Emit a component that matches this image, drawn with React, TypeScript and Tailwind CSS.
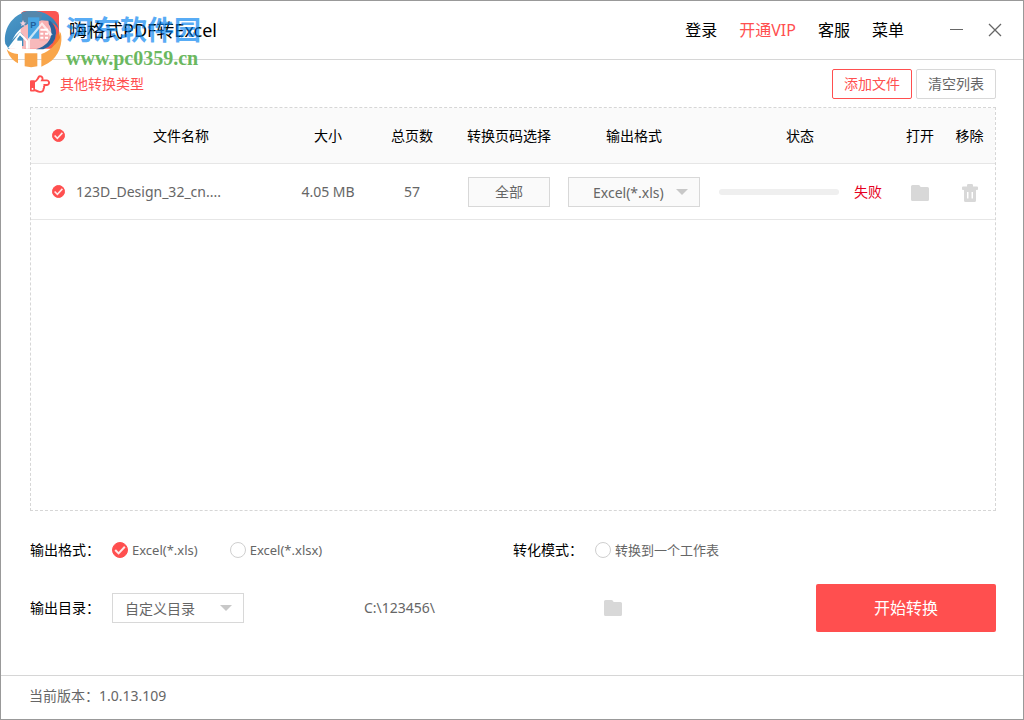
import React, { useState } from "react";
import { FaRegHandPointRight } from "react-icons/fa";

const headings = ["文件名称", "大小", "总页数", "转换页码选择", "输出格式", "状态", "打开", "移除"];

const menu = [
    { label: "登录", color: "text-black" },
    { label: "开通VIP", color: "text-[#ff4f4f]" },
    { label: "客服", color: "text-black" },
    { label: "菜单", color: "text-black" },
];

function FolderIcon() {
    return (
        <svg width="18" height="16" viewBox="0 0 18 16" className="fill-[#d8d8d8]">
            <path d="M1.5 0H7.5Q8.5 0 9 1L9.6 2H16.5Q18 2 18 3.5V14.5Q18 16 16.5 16H1.5Q0 16 0 14.500V1.5Q0 0 1.5 0Z" />
        </svg>
    );
}

function TrashIcon() {
    return (
        <svg width="16" height="18" viewBox="0 0 16 18" className="fill-[#d8d8d8]">
            <path
                fillRule="evenodd"
                d="M5 2.500V1.200Q5 0 6.200 0H9.800Q11 0 11 1.200V2.500H15Q16 2.500 16 3.500V5.200Q16 6 15 6H14V16.500Q14 18 12.500 18H3.500Q2 18 2 16.500V6H1Q0 6 0 5.200V3.500Q0 2.500 1 2.500ZM5 8V14.500H6.500V8ZM9.500 8V14.500H11V8Z"
            />
        </svg>
    );
}

function Tick({ className }: { className: string }) {
    return (
        <svg viewBox="0 0 16 16" className={`pointer-events-none col-start-1 row-start-1 ${className}`}>
            <path d="M3.200 8L6.600 11.400L12.800 4.800" fill="none" stroke="#ffe9e9" strokeWidth="2" />
        </svg>
    );
}

function RowCheck({ label }: { label: string }) {
    const [on, setOn] = useState(true);
    return (
        <span className="grid w-[13px]">
            <input
                type="checkbox"
                aria-label={label}
                checked={on}
                onChange={() => setOn(!on)}
                className="peer col-start-1 row-start-1 size-[13px] appearance-none rounded-full border border-[#d0d0d0] checked:border-[#ff4f4f] checked:bg-[#ff4f4f]"
            />
            <Tick className="hidden size-[13px] peer-checked:block" />
        </span>
    );
}

type RadioProps = { name: string; label: string; checked: boolean; onChange: () => void };

function Radio({ name, label, checked, onChange }: RadioProps) {
    return (
        <label className="flex items-center gap-1 text-[13px] text-[#666]">
            <span className="grid">
                <input
                    type="radio"
                    name={name}
                    checked={checked}
                    onChange={onChange}
                    className="peer col-start-1 row-start-1 size-4 appearance-none rounded-full border border-[#cfcfcf] checked:border-[#ff4f4f] checked:bg-[#ff4f4f]"
                />
                <Tick className="hidden size-4 peer-checked:block" />
            </span>
            {label}
        </label>
    );
}

type DropDownProps = { label: string; options: string[]; className: string };

function DropDown({ label, options, className }: DropDownProps) {
    return (
        <span className="relative inline-block align-middle">
            <select
                aria-label={label}
                className={`block h-[30px] w-[132px] appearance-none border border-[#d8d8d8] pt-0.5 text-sm text-[#666] ${className}`}
            >
                {options.map((o) => (
                    <option key={o}>{o}</option>
                ))}
            </select>
            <svg width="12" height="6" viewBox="0 0 12 6" className="pointer-events-none absolute top-3 right-3 fill-[#c8c8c8]">
                <path d="M0 0H12L6 6Z" />
            </svg>
        </span>
    );
}

function Logo() {
    return (
        <svg width="70" height="66" viewBox="0 0 210 198" className="shrink-0">
            <defs>
                <linearGradient id="ring" x1="0" y1="0" x2="1" y2="1">
                    <stop offset="0" stopColor="#4f9bc9" />
                    <stop offset="1" stopColor="#2873ad" />
                </linearGradient>
            </defs>
            <rect x="62" y="21" width="115" height="113" rx="14" fill="#fa5652" />
            {/* faded inside of the ring */}
            <path d="M30 134C40 80 84 44 124 48C160 52 176 84 160 112Q152 128 134 134Z" fill="#f7b9bb" />
            <path d="M30 134C34 104 46 82 62 68V134Z" fill="#fff" />
            <path d="M16 120C8 72 42 22 98 21C138 20 172 46 178 80C170 60 148 48 122 50C82 52 40 78 28 136Z" fill="url(#ring)" />
            <path d="M66 25Q98 15 128 29L122 50Q92 52 66 68Z" fill="#5687ab" />
            <path d="M150 50Q168 64 168 88Q166 124 130 136H108Q154 120 154 86Q154 64 138 52Z" fill="#2a629c" />
            <path d="M22 122L60 84L70 94V126H50V108L28 134H24Z" fill="#3c8cbc" />
            <rect x="84" y="40" width="34" height="64" fill="#49a5e2" />
            <text x="91" y="73" className="fill-[#23609b] font-['Liberation_Sans'] text-[27px] font-bold">
                P
            </text>
            <rect x="118" y="50" width="28" height="62" rx="4" fill="#f8aeb0" />
            <path d="M24 132L60 84L84 110V134H78V112L60 94L52 104V134H44V116L30 134Z" fill="#fff" />
            <path d="M50 110H66V150H50Z" fill="#fff" />
            <path d="M84 104L126 54L158 92L150 96L126 64L90 108V134H84Z" fill="#fff" opacity=".7" />
            <path d="M121 74H144V80H121ZM121 86H130V92H121ZM135 86H144V92H135ZM121 98H130V104H121ZM135 98H144V104H135Z" fill="#fff" />
            <path d="M69 48L72 55L79 56L73 60L75 67L69 63L63 67L65 60L59 56L66 55Z" fill="#f4cfdc" />
            <path d="M182 84C190 116 178 158 144 178L124 188V150C152 142 170 120 182 84Z" fill="#f9a64b" />
            <path d="M20 134C26 144 40 148 54 150V178C36 168 24 152 20 134Z" fill="#f9a64b" />
            <path d="M74 148H112V187Q94 192 74 187Z" fill="#f7a44a" />
            <path d="M170 94Q166 120 148 134Q168 124 180 102L178 82Z" fill="#f37a2b" />
        </svg>
    );
}

function App() {
    const [format, setFormat] = useState("xls");
    const [single, setSingle] = useState(false);

    return (
        <div className="flex min-h-screen flex-col border border-[#999] bg-white font-['Noto_Sans','Noto_Sans_CJK_SC',sans-serif] text-sm text-black">
            <header className="relative flex h-[59px] items-center border-b border-[#d6d6d6] pr-[21px] pl-[68px]">
                <h1 className="text-lg">嗨格式PDF转Excel</h1>
                <nav className="ml-auto flex gap-[22px] text-base">
                    {menu.map((m) => (
                        <a key={m.label} href="#" className={m.color}>
                            {m.label}
                        </a>
                    ))}
                </nav>
                <button aria-label="最小化" className="ml-[45px]">
                    <svg width="15" height="14" viewBox="0 0 15 14" fill="none" stroke="#666">
                        <path d="M1 6.500H14" />
                    </svg>
                </button>
                <button aria-label="关闭" className="ml-6">
                    <svg width="14" height="14" viewBox="0 0 14 14" fill="none" stroke="#666" strokeWidth="1.3">
                        <path d="M1 1L13 13M13 1L1 13" />
                    </svg>
                </button>

                {/* site mark lying over the title */}
                <div className="pointer-events-none absolute top-[3px] -left-px flex">
                    <Logo />
                    <div className="-ml-1 pt-2.5 whitespace-nowrap">
                        <div className="text-[27px] leading-8 font-bold text-[#0080f0] opacity-65">河东软件园</div>
                        <div className="font-['Liberation_Serif',serif] text-xl leading-6 font-bold text-[#6bb85f]">www.pc0359.cn</div>
                    </div>
                </div>
            </header>

            <main className="flex flex-1 flex-col pr-[27px] pl-[29px]">
                <div className="flex items-center gap-1 pt-[9px] pb-2">
                    <a href="#" className="mr-auto flex items-center gap-[10px] text-[#ff4f4f]">
                        <FaRegHandPointRight size={20} />
                        其他转换类型
                    </a>
                    <button className="h-[30px] w-20 rounded-xs border border-[#ff4f4f] text-[#ff4f4f]">添加文件</button>
                    <button className="h-[30px] w-20 rounded-xs border border-[#d8d8d8] text-[#666]">清空列表</button>
                </div>

                <div className="flex-1 border border-dashed border-[#d6d6d6]">
                    <table className="w-full table-fixed border-separate border-spacing-0">
                        <colgroup>
                            <col className="w-[45px]" />
                            <col />
                            <col className="w-[84px]" />
                            <col className="w-[84px]" />
                            <col className="w-[110px]" />
                            <col className="w-[140px]" />
                            <col className="w-[192px]" />
                            <col className="w-12" />
                            <col className="w-[51px]" />
                        </colgroup>
                        <thead className="bg-[#fafafa]">
                            <tr className="h-14 *:border-b *:border-[#e6e6e6]">
                                <th className="pl-[21px]">
                                    <RowCheck label="全选" />
                                </th>
                                {headings.map((h) => (
                                    <th key={h} className="font-normal whitespace-nowrap">
                                        {h}
                                    </th>
                                ))}
                            </tr>
                        </thead>
                        <tbody>
                            <tr className="h-14 text-center text-[#666] *:border-b *:border-[#e6e6e6]">
                                <td className="pl-[21px]">
                                    <RowCheck label="选择文件" />
                                </td>
                                <td className="text-left">123D_Design_32_cn....</td>
                                <td>4.05 MB</td>
                                <td>57</td>
                                <td>
                                    <button className="h-[30px] w-[82px] border border-[#d8d8d8] bg-[#fafafa] align-middle">全部</button>
                                </td>
                                <td>
                                    <DropDown label="输出格式" options={["Excel(*.xls)", "Excel(*.xlsx)"]} className="bg-[#fafafa] pl-6" />
                                </td>
                                <td>
                                    <div className="flex items-center gap-[15px] pl-[15px]">
                                        <div className="h-1.5 w-[120px] rounded-full bg-[#efefef]"></div>
                                        <span className="text-[#e60021]">失败</span>
                                    </div>
                                </td>
                                <td>
                                    <button aria-label="打开" className="align-middle">
                                        <FolderIcon />
                                    </button>
                                </td>
                                <td>
                                    <button aria-label="移除" className="align-middle">
                                        <TrashIcon />
                                    </button>
                                </td>
                            </tr>
                        </tbody>
                    </table>
                </div>

                <div className="flex h-[164px] flex-col pt-7">
                    <div className="flex h-[22px] items-center">
                        <span className="w-[82px]">输出格式：</span>
                        <div className="flex w-[401px] gap-8">
                            <Radio name="format" label="Excel(*.xls)" checked={format === "xls"} onChange={() => setFormat("xls")} />
                            <Radio name="format" label="Excel(*.xlsx)" checked={format === "xlsx"} onChange={() => setFormat("xlsx")} />
                        </div>
                        <span className="w-[82px]">转化模式：</span>
                        <Radio name="mode" label="转换到一个工作表" checked={single} onChange={() => setSingle(true)} />
                    </div>
                    <div className="mt-[23px] flex h-12 items-center">
                        <span className="w-[82px]">输出目录：</span>
                        <DropDown label="输出目录" options={["自定义目录", "源文件目录"]} className="bg-white pl-3" />
                        <span className="ml-[120px] w-60 text-[#666]">C:\123456\</span>
                        <button aria-label="选择目录">
                            <FolderIcon />
                        </button>
                        <button className="ml-auto h-12 w-[180px] rounded-xs bg-[#ff4f4f] text-base text-white">开始转换</button>
                    </div>
                </div>
            </main>

            <footer className="flex h-11 items-center border-t border-[#d6d6d6] pb-1 pl-7 text-[#666]">当前版本：1.0.13.109</footer>
        </div>
    );
}

export default App;
